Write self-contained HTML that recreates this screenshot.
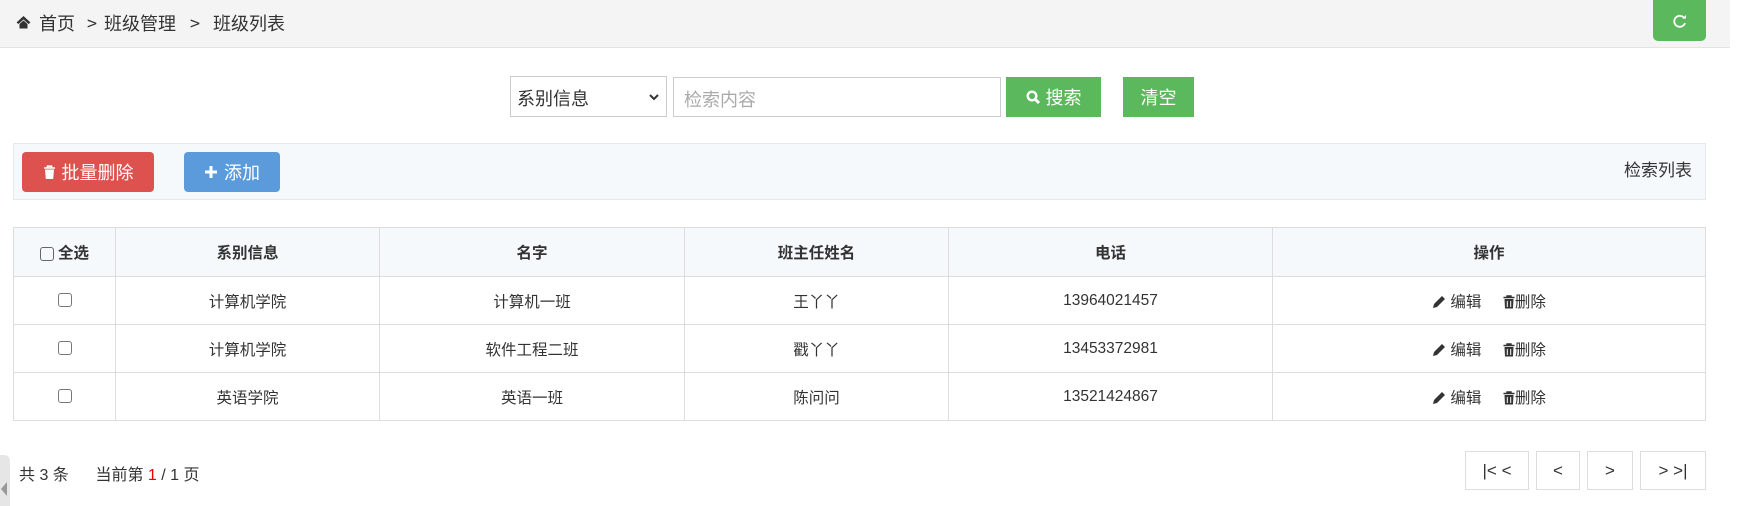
<!DOCTYPE html>
<html><head><meta charset="utf-8"><style>
*{box-sizing:border-box;margin:0;padding:0}
body{width:1742px;height:506px;overflow:hidden;background:#fff;font-family:"Liberation Sans","Noto Sans CJK SC",sans-serif;color:#333;position:relative;font-size:15.5px}
.abs{position:absolute}
.hdr{left:0;top:0;width:1730px;height:48px;background:#f4f4f4;border-bottom:1px solid #e3e3e3}
.bc{top:11px;font-size:18px;line-height:26px;color:#333;white-space:nowrap}
.btn{position:absolute;color:#fff;display:flex;align-items:center;justify-content:center;font-size:18px}
table{position:absolute;left:13px;top:227px;width:1693px;border-collapse:collapse}
td,th{border:1px solid #ddd;text-align:center;font-size:15.5px}
th{background:#f5f9fc;height:49px;font-weight:bold}
td{height:48px}
.cb{display:inline-block;width:14px;height:14px;border:1px solid #777;border-radius:3px;vertical-align:middle}
.pg{position:absolute;top:451px;height:39px;border:1px solid #ddd;display:flex;align-items:center;justify-content:center;font-size:17px}
.op svg{vertical-align:-2px}
</style></head><body>
<div class="abs hdr"></div>
<svg class="abs" style="left:16px;top:15px" width="15" height="14" viewBox="0 0 15 14"><path d="M7.5 1 L14.5 7.5 L12.5 9 L7.5 4.5 L2.5 9 L0.5 7.5Z M3.5 9 L7.5 5.5 L11.5 9 V13.5 H3.5Z" fill="#333"/></svg>
<div class="abs bc" style="left:39px">首页</div>
<div class="abs bc" style="left:87px;top:10px;font-family:'Noto Sans CJK SC',sans-serif">&gt;</div>
<div class="abs bc" style="left:104px">班级管理</div>
<div class="abs bc" style="left:190px;top:10px;font-family:'Noto Sans CJK SC',sans-serif">&gt;</div>
<div class="abs bc" style="left:213px">班级列表</div>
<div class="btn" style="left:1653px;top:0;width:53px;height:41px;background:#5cb85c;border-radius:0 0 5px 5px">
<svg width="16" height="16" viewBox="0 0 16 16"><path d="M12.5 5.5 A5.5 5.5 0 1 0 13 10" stroke="#fff" stroke-width="1.8" fill="none"/><path d="M10.5 5.5 L14 5.5 L14 2Z" fill="#fff"/></svg></div>

<div class="abs" style="left:510px;top:76px;width:157px;height:41px;border:1px solid #ccc;font-size:18px;padding:8px 0 0 6px">系别信息
<svg class="abs" style="left:138px;top:17px" width="10" height="7" viewBox="0 0 10 7"><path d="M1 1 L5 5 L9 1" stroke="#333" stroke-width="2" fill="none"/></svg></div>
<div class="abs" style="left:673px;top:77px;width:328px;height:40px;border:1px solid #ccc;font-size:18px;padding:8px 0 0 10px;color:#aaa">检索内容</div>
<div class="btn" style="left:1006px;top:77px;width:95px;height:40px;background:#5cb85c">
<svg width="15" height="15" viewBox="0 0 15 15" style="margin-right:5px"><circle cx="6" cy="6" r="4.3" stroke="#fff" stroke-width="2.4" fill="none"/><path d="M9 9 L13 13" stroke="#fff" stroke-width="3"/></svg>搜索</div>
<div class="btn" style="left:1123px;top:77px;width:71px;height:40px;background:#5cb85c">清空</div>

<div class="abs" style="left:13px;top:143px;width:1693px;height:57px;background:#f5f9fc;border:1px solid #e6e9ec"></div>
<div class="btn" style="left:22px;top:152px;width:132px;height:40px;background:#dd524e;border-radius:4px">
<svg width="13" height="15" viewBox="0 0 13 15" style="margin-right:6px"><path d="M1 3 H12 M4.5 3 V1.2 H8.5 V3" stroke="#fff" stroke-width="1.6" fill="none"/><path d="M2 4.5 H11 L10.2 14 H2.8Z" fill="#fff"/></svg>批量删除</div>
<div class="btn" style="left:184px;top:152px;width:96px;height:40px;background:#5b9bdc;border-radius:4px">
<svg width="14" height="14" viewBox="0 0 14 14" style="margin-right:6px"><path d="M7 1 V13 M1 7 H13" stroke="#fff" stroke-width="3"/></svg>添加</div>
<div class="abs" style="left:1624px;top:156px;font-size:17px">检索列表</div>

<table>
<tr><th style="width:102px"><span class="cb" style="margin-right:4px;border-color:#666"></span>全选</th><th style="width:264px">系别信息</th><th style="width:305px">名字</th><th style="width:264px">班主任姓名</th><th style="width:324px">电话</th><th>操作</th></tr>
<tr><td><span class="cb"></span></td><td>计算机学院</td><td>计算机一班</td><td>王丫丫</td><td>13964021457</td><td class="op"><svg width="14" height="14" viewBox="0 0 14 14"><path d="M1 13 L2 9 L10 1 L13 4 L5 12Z" fill="#333"/></svg> 编辑 &nbsp;&nbsp;&nbsp;&nbsp;<svg width="12" height="14" viewBox="0 0 12 14"><path d="M0.5 2.5 H11.5 M4 2.5 V1 H8 V2.5" stroke="#333" stroke-width="1.4" fill="none"/><path d="M1.5 4 H10.5 L10 13.5 H2Z" fill="#333"/><path d="M4.3 6 V12 M7.7 6 V12" stroke="#fff" stroke-width="1"/></svg>删除</td></tr>
<tr><td><span class="cb"></span></td><td>计算机学院</td><td>软件工程二班</td><td>戳丫丫</td><td>13453372981</td><td class="op"><svg width="14" height="14" viewBox="0 0 14 14"><path d="M1 13 L2 9 L10 1 L13 4 L5 12Z" fill="#333"/></svg> 编辑 &nbsp;&nbsp;&nbsp;&nbsp;<svg width="12" height="14" viewBox="0 0 12 14"><path d="M0.5 2.5 H11.5 M4 2.5 V1 H8 V2.5" stroke="#333" stroke-width="1.4" fill="none"/><path d="M1.5 4 H10.5 L10 13.5 H2Z" fill="#333"/><path d="M4.3 6 V12 M7.7 6 V12" stroke="#fff" stroke-width="1"/></svg>删除</td></tr>
<tr><td><span class="cb"></span></td><td>英语学院</td><td>英语一班</td><td>陈问问</td><td>13521424867</td><td class="op"><svg width="14" height="14" viewBox="0 0 14 14"><path d="M1 13 L2 9 L10 1 L13 4 L5 12Z" fill="#333"/></svg> 编辑 &nbsp;&nbsp;&nbsp;&nbsp;<svg width="12" height="14" viewBox="0 0 12 14"><path d="M0.5 2.5 H11.5 M4 2.5 V1 H8 V2.5" stroke="#333" stroke-width="1.4" fill="none"/><path d="M1.5 4 H10.5 L10 13.5 H2Z" fill="#333"/><path d="M4.3 6 V12 M7.7 6 V12" stroke="#fff" stroke-width="1"/></svg>删除</td></tr>
</table>

<div class="abs" style="left:19px;top:461px;font-size:16px">共 3 条 &nbsp;&nbsp;&nbsp;&nbsp; 当前第 <span style="color:#e00">1</span> / 1 页</div>
<div class="pg" style="left:1465px;width:64px">|&lt; &lt;</div>
<div class="pg" style="left:1536px;width:44px">&lt;</div>
<div class="pg" style="left:1587px;width:46px">&gt;</div>
<div class="pg" style="left:1640px;width:66px">&gt; &gt;|</div>
<div class="abs" style="left:0;top:455px;width:10px;height:51px;background:#e6e6e6;border-radius:0 6px 0 0"></div>
<svg class="abs" style="left:1px;top:482px" width="6" height="14" viewBox="0 0 6 14"><path d="M6 0 L0 7 L6 14Z" fill="#999"/></svg>
</body></html>
